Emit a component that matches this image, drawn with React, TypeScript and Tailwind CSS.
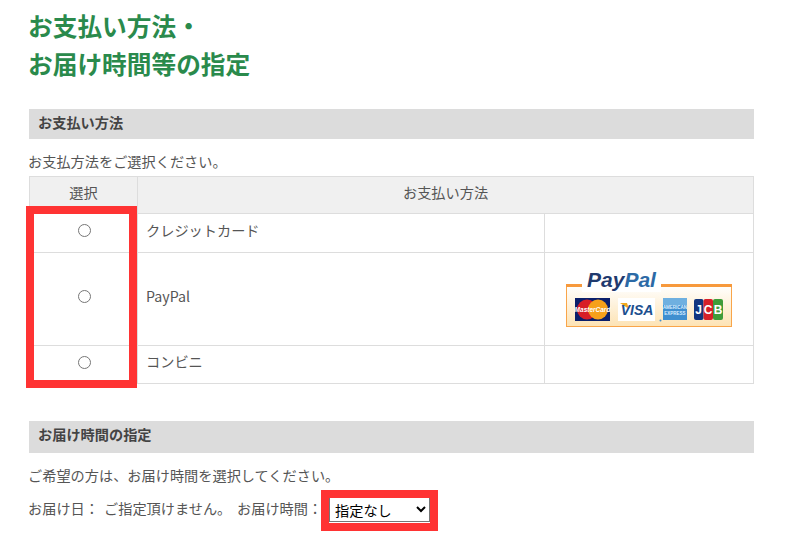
import React from 'react';

const font = { fontFamily: '"Noto Sans CJK JP", "Liberation Sans", sans-serif' };

function PayPalLogo() {
  return (
    <svg width="166" height="60" viewBox="0 -4 166 60" className="block">
      <defs>
        <linearGradient id="box" x1="0" y1="0" x2="0" y2="1">
          <stop offset="0" stopColor="#ffffff" />
          <stop offset="1" stopColor="#fde3b4" />
        </linearGradient>
      </defs>
      <rect x="0.5" y="13.5" width="165" height="41" fill="url(#box)" stroke="#f9a54a" />
      <rect x="0" y="12" width="16" height="3" fill="#f7993c" />
      <rect x="95" y="12" width="71" height="3" fill="#f7993c" />
      <rect x="16" y="0" width="79" height="20" fill="#fff" />
      <text x="21" y="15" fontFamily="Liberation Sans" fontWeight="700" fontStyle="italic" fontSize="21" fill="#1f3a6e">Pay<tspan fill="#2c6aa6">Pal</tspan></text>
      {/* mastercard */}
      <rect x="9" y="26" width="35" height="23" fill="#0b1f6b" />
      <circle cx="21" cy="37.5" r="10" fill="#d81e27" />
      <circle cx="32" cy="37.5" r="10" fill="#f6a01a" />
      <text x="26.5" y="39.5" textAnchor="middle" fontFamily="Liberation Sans" fontWeight="700" fontStyle="italic" fontSize="6.5" fill="#fff">MasterCard</text>
      {/* visa */}
      <rect x="52" y="26" width="37" height="23" fill="#fff" />
      <path d="M54 31 h7 l2 6 z" fill="#f2a81d" />
      <text x="71" y="43" textAnchor="middle" fontFamily="Liberation Sans" fontWeight="700" fontStyle="italic" fontSize="14" fill="#1b4f8f">VISA</text>
      {/* amex */}
      <rect x="97" y="26" width="24" height="22" fill="#3f8fd0" />
      <rect x="97" y="26" width="24" height="7" fill="#6fb0e0" />
      <text x="109" y="37" textAnchor="middle" fontFamily="Liberation Sans" fontWeight="700" fontSize="4.5" fill="#dbeeff">AMERICAN</text>
      <text x="109" y="43" textAnchor="middle" fontFamily="Liberation Sans" fontWeight="700" fontSize="4.5" fill="#dbeeff">EXPRESS</text>
      <circle cx="94.5" cy="48.5" r="1" fill="#3f8fd0" />
      {/* jcb */}
      <rect x="128" y="27" width="9.5" height="21" rx="2" fill="#12357f" />
      <rect x="137.5" y="27" width="9.5" height="21" rx="2" fill="#d7202a" />
      <rect x="147" y="27" width="10" height="21" rx="2" fill="#3f9c3a" />
      <text x="132.7" y="42" textAnchor="middle" fontFamily="Liberation Sans" fontWeight="700" fontSize="12" fill="#fff">J</text>
      <text x="142.2" y="42" textAnchor="middle" fontFamily="Liberation Sans" fontWeight="700" fontSize="12" fill="#fff">C</text>
      <text x="152" y="42" textAnchor="middle" fontFamily="Liberation Sans" fontWeight="700" fontSize="12" fill="#fff">B</text>
    </svg>
  );
}

const rows = [
  { name: 'クレジットカード', height: 'h-[39px]', logo: false },
  { name: 'PayPal', height: 'h-[93px]', logo: true },
  { name: 'コンビニ', height: 'h-[38px]', logo: false },
];

export default function App() {
  return (
    <div className="relative w-[800px] h-[533px] overflow-hidden bg-white text-[#555555]" style={font}>
      <div className="ml-[29px] w-[725px] pt-[6px]">
        <h1 className="-ml-[1px] text-[24.7px] leading-[38px] font-bold text-[#2a8a4c]">
          お支払い方法・<br />お届け時間等の指定
        </h1>

        <h2 className="mt-[27px] h-[30px] pl-[9px] bg-[#dcdcdc] text-[14.2px] font-bold leading-[26px] text-[#444444]">お支払い方法</h2>
        <p className="-ml-[1px] mt-[12px] text-[14.2px] leading-[20px]">お支払方法をご選択ください。</p>
        <table className="mt-[5px] w-[724px] table-fixed border-collapse text-[14.2px]">
          <colgroup>
            <col className="w-[108px]" />
            <col className="w-[407px]" />
            <col className="w-[209px]" />
          </colgroup>
          <thead>
            <tr className="h-[37px] bg-[#f0f0f0]">
              <th className="border border-[#dddddd] font-normal pb-[5px]">選択</th>
              <th colSpan={2} className="border border-[#dddddd] font-normal pb-[5px]">お支払い方法</th>
            </tr>
          </thead>
          <tbody>
            {rows.map((row) => (
              <tr key={row.name} className={row.height}>
                <td className="border border-[#dddddd] text-center align-middle pb-[7px]">
                  <input type="radio" name="pay" className="inline-block align-middle ml-[2px]" />
                </td>
                <td className="border border-[#dddddd] pl-[8px] pb-[5px]">{row.name}</td>
                <td className="border border-[#dddddd] pb-[3px]">
                  {row.logo && <div className="flex justify-center"><PayPalLogo /></div>}
                </td>
              </tr>
            ))}
          </tbody>
        </table>

        <h2 className="mt-[37px] h-[32px] pl-[9px] bg-[#dcdcdc] text-[14.2px] font-bold leading-[26px] text-[#444444]">お届け時間の指定</h2>
        <p className="-ml-[1px] mt-[12px] text-[14.2px] leading-[20px]">ご希望の方は、お届け時間を選択してください。</p>
        <div className="-ml-[1px] mt-[11px] flex items-center text-[14.2px] leading-[24px]">
          <span className="w-[76px] pb-[3px]">お届け日：</span>
          <span className="w-[133px] pb-[3px]">ご指定頂けません。</span>
          <span className="w-[92px] pb-[3px]">お届け時間：</span>
          <select className="w-[101px] h-[25px] border border-[#767676] bg-white text-[14.2px] text-black pl-[1px]" style={font}>
            <option>指定なし</option>
          </select>
        </div>
      </div>

      <div className="absolute left-[26px] top-[206px] w-[111px] h-[182px] border-[8px] border-[#ff3333]" />
      <div className="absolute left-[321px] top-[490px] w-[117px] h-[41px] border-[8px] border-[#ff3333]" />
    </div>
  );
}
